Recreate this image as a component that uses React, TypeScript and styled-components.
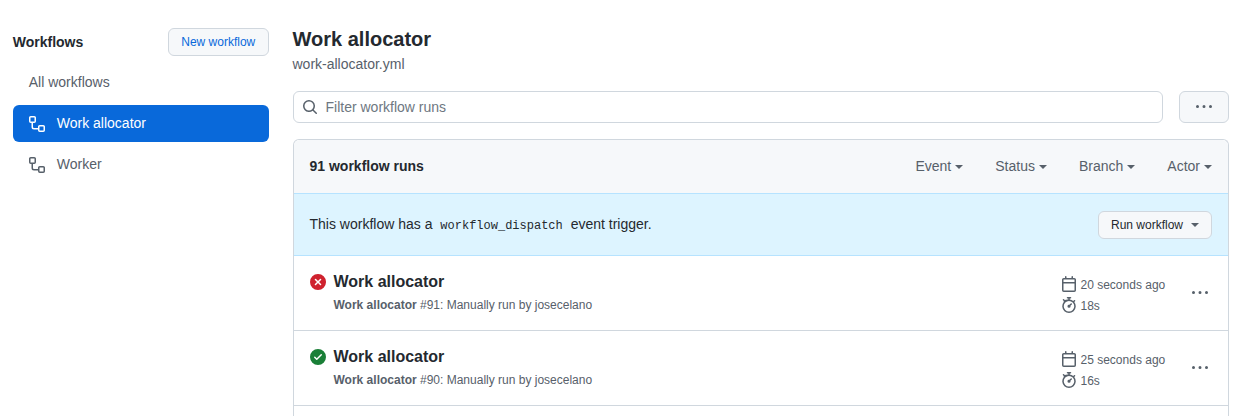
import React from "react";
import styled, { createGlobalStyle } from "styled-components";

const GlobalStyle = createGlobalStyle`
  html, body {
    margin: 0;
    padding: 0;
    height: 416px;
    overflow: hidden;
    background: #ffffff;
    color: #24292f;
    font-family: "Liberation Sans", Arial, sans-serif;
    font-size: 14px;
    line-height: 1.5;
  }
`;

const Page = styled.div`
  display: flex;
  gap: 24px;
  padding: 28px 24px 0 12.75px;
  height: 416px;
  box-sizing: border-box;
  overflow: hidden;
`;

const Sidebar = styled.aside`
  width: 255.75px;
  flex: none;
`;

const SidebarHeader = styled.div`
  display: flex;
  align-items: center;
  justify-content: space-between;
  height: 28px;
  margin-bottom: 8px;
`;

const SidebarTitle = styled.h2`
  margin: 0;
  font-size: 14px;
  font-weight: 700;
`;

const NewWorkflowButton = styled.button`
  width: 100.5px;
  height: 28px;
  padding: 0;
  border: 1px solid #d0d7de;
  border-radius: 6px;
  background: #f6f8fa;
  color: #0969da;
  font: 12px "Liberation Sans", Arial, sans-serif;
`;

const NavList = styled.nav`
  display: flex;
  flex-direction: column;
  gap: 4px;
`;

const NavItem = styled.a<{ $active?: boolean }>`
  display: flex;
  align-items: center;
  gap: 12px;
  height: 37px;
  padding: 0 16px;
  border-radius: 6px;
  background: ${props => (props.$active ? "#0969da" : "transparent")};
  color: ${props => (props.$active ? "#ffffff" : "#57606a")};
  font-size: 14px;
`;

const Main = styled.main`
  flex: 1;
  min-width: 0;
`;

const Title = styled.h1`
  margin: 0;
  font-size: 20px;
  font-weight: 700;
  line-height: 23px;
`;

const FileName = styled.div`
  margin-top: 3px;
  color: #57606a;
  font-size: 14px;
  line-height: 21px;
`;

const FilterRow = styled.div`
  display: flex;
  gap: 16px;
  margin-top: 16px;
`;

const FilterInput = styled.div`
  flex: 1;
  display: flex;
  align-items: center;
  gap: 8px;
  height: 32px;
  padding: 0 8px;
  box-sizing: border-box;
  border: 1px solid #d0d7de;
  border-radius: 6px;
  color: #6e7781;
  font-size: 14px;

  svg {
    color: #57606a;
  }
`;

const KebabButton = styled.button`
  display: flex;
  align-items: center;
  justify-content: center;
  width: 50px;
  height: 32px;
  padding: 0;
  border: 1px solid #d0d7de;
  border-radius: 6px;
  background: #f6f8fa;
  color: #57606a;
`;

const RunsBox = styled.section`
  margin-top: 16px;
  border: 1px solid #d0d7de;
  border-bottom: none;
  border-radius: 6px 6px 0 0;
`;

const BoxHeader = styled.div`
  display: flex;
  align-items: center;
  justify-content: space-between;
  height: 53px;
  padding: 0 16px;
  background: #f6f8fa;
  border-radius: 6px 6px 0 0;
`;

const RunCount = styled.strong`
  font-size: 14px;
  font-weight: 700;
`;

const Filters = styled.div`
  display: flex;
  gap: 32px;
`;

const FilterMenu = styled.span`
  display: inline-flex;
  align-items: center;
  gap: 4px;
  color: #57606a;
  font-size: 14px;
`;

const Caret = styled.span<{ $color?: string }>`
  display: inline-block;
  width: 0;
  height: 0;
  margin-top: 1px;
  border-top: 4px solid ${props => props.$color || "currentColor"};
  border-left: 4px solid transparent;
  border-right: 4px solid transparent;
`;

const Notice = styled.div`
  display: flex;
  align-items: center;
  justify-content: space-between;
  height: 61px;
  padding: 0 16px;
  background: #ddf4ff;
  border-top: 1px solid #b6e3ff;
  border-bottom: 1px solid #b6e3ff;
  font-size: 14px;
`;

const Code = styled.code`
  margin: 0 4px;
  font-family: "Liberation Mono", monospace;
  font-size: 12px;
`;

const RunButton = styled.button`
  display: flex;
  align-items: center;
  gap: 8px;
  height: 28px;
  padding: 0 12px;
  border: 1px solid #d0d7de;
  border-radius: 6px;
  background: #f6f8fa;
  color: #24292f;
  font: 12px "Liberation Sans", Arial, sans-serif;
`;

const Run = styled.div`
  display: flex;
  align-items: flex-start;
  height: 75px;
  padding: 0 16px;
  box-sizing: border-box;
  border-bottom: 1px solid #d0d7de;
`;

const StatusIcon = styled.svg<{ $color: string }>`
  flex: none;
  margin-top: 18px;
  color: ${props => props.$color};
`;

const RunBody = styled.div`
  flex: 1;
  min-width: 0;
  margin-left: 8px;
  padding-top: 14px;
`;

const RunTitle = styled.div`
  font-size: 16px;
  font-weight: 700;
  line-height: 24px;
`;

const RunMeta = styled.div`
  margin-top: 2px;
  color: #57606a;
  font-size: 12px;
  line-height: 18px;

  b {
    font-weight: 700;
  }
`;

const RunTiming = styled.div`
  display: flex;
  flex-direction: column;
  gap: 1px;
  width: 128.5px;
  flex: none;
  padding-top: 18px;
  color: #57606a;
  font-size: 12px;
`;

const TimingLine = styled.div`
  display: flex;
  align-items: center;
  gap: 4px;
  height: 20px;
  line-height: 18px;
`;

const TimingText = styled.span`
  margin-top: 2px;
`;

const RunMenu = styled.div`
  flex: none;
  width: 18px;
  margin: 0 3px 0 2px;
  padding-top: 29px;
  color: #57606a;
  display: flex;
  justify-content: center;
`;

const WORKFLOW =
  "M0 1.75C0 .784.784 0 1.75 0h3.5C6.216 0 7 .784 7 1.75v3.5A1.75 1.75 0 0 1 5.25 7H4v4a1 1 0 0 0 1 1h4v-1.25C9 9.784 9.784 9 10.75 9h3.5c.966 0 1.75.784 1.75 1.75v3.5A1.75 1.75 0 0 1 14.25 16h-3.5A1.75 1.75 0 0 1 9 14.25v-.75H5A2.5 2.5 0 0 1 2.5 11V7h-.75A1.75 1.75 0 0 1 0 5.25Zm1.75-.25a.25.25 0 0 0-.25.25v3.5c0 .138.112.25.25.25h3.5a.25.25 0 0 0 .25-.25v-3.5a.25.25 0 0 0-.25-.25Zm9 9a.25.25 0 0 0-.25.25v3.5c0 .138.112.25.25.25h3.5a.25.25 0 0 0 .25-.25v-3.5a.25.25 0 0 0-.25-.25Z";
const SEARCH =
  "M10.68 11.74a6 6 0 0 1-7.922-8.982 6 6 0 0 1 8.982 7.922l3.04 3.04a.749.749 0 0 1-.326 1.275.749.749 0 0 1-.734-.215ZM11.5 7a4.499 4.499 0 1 0-8.997 0A4.499 4.499 0 0 0 11.5 7Z";
const KEBAB =
  "M8 9a1.5 1.5 0 1 0 0-3 1.5 1.5 0 0 0 0 3ZM1.5 9a1.5 1.5 0 1 0 0-3 1.5 1.5 0 0 0 0 3Zm13 0a1.5 1.5 0 1 0 0-3 1.5 1.5 0 0 0 0 3Z";
const X_CIRCLE =
  "M2.343 13.657A8 8 0 1 1 13.658 2.343 8 8 0 0 1 2.343 13.657ZM6.03 4.97a.751.751 0 0 0-1.042.018.751.751 0 0 0-.018 1.042L6.94 8 4.97 9.97a.749.749 0 0 0 .326 1.275.749.749 0 0 0 .734-.215L8 9.06l1.97 1.97a.749.749 0 0 0 1.275-.326.749.749 0 0 0-.215-.734L9.06 8l1.97-1.97a.749.749 0 0 0-.326-1.275.749.749 0 0 0-.734.215L8 6.94Z";
const CHECK_CIRCLE =
  "M8 16A8 8 0 1 1 8 0a8 8 0 0 1 0 16Zm3.78-9.72a.751.751 0 0 0-.018-1.042.751.751 0 0 0-1.042-.018L6.75 9.19 5.28 7.72a.751.751 0 0 0-1.042.018.751.751 0 0 0-.018 1.042l2 2a.75.75 0 0 0 1.06 0Z";
const CALENDAR =
  "M4.75 0a.75.75 0 0 1 .75.75V2h5V.75a.75.75 0 0 1 1.5 0V2h1.25c.966 0 1.75.784 1.75 1.75v10.5A1.75 1.75 0 0 1 13.25 16H2.75A1.75 1.75 0 0 1 1 14.25V3.75C1 2.784 1.784 2 2.75 2H4V.75A.75.75 0 0 1 4.75 0ZM2.5 7.5v6.75c0 .138.112.25.25.25h10.5a.25.25 0 0 0 .25-.25V7.5Zm10.75-4H2.75a.25.25 0 0 0-.25.25V6h11V3.75a.25.25 0 0 0-.25-.25Z";
const STOPWATCH =
  "M5.75.75A.75.75 0 0 1 6.5 0h3a.75.75 0 0 1 0 1.5h-.75v1l-.001.041a6.724 6.724 0 0 1 3.464 1.435l.007-.006.75-.75a.749.749 0 0 1 1.275.326.749.749 0 0 1-.215.734l-.75.75-.006.007a6.75 6.75 0 1 1-10.548 0L2.72 4.03l-.75-.75a.751.751 0 0 1 .018-1.042.751.751 0 0 1 1.042-.018l.75.75.007.006A6.72 6.72 0 0 1 7.25 2.541V1.5H6.5a.75.75 0 0 1-.75-.75ZM8 14.5a5.25 5.25 0 1 0-.001-10.501A5.25 5.25 0 0 0 8 14.5Zm.389-6.7 1.33-1.33a.75.75 0 1 1 1.061 1.06L9.45 8.861A1.503 1.503 0 0 1 8 10.75a1.499 1.499 0 1 1 .389-2.95Z";

const Icon = ({ d, size = 16 }: { d: string; size?: number }) => (
  <svg width={size} height={size} viewBox="0 0 16 16" fill="currentColor" style={{ flex: "none" }}>
    <path d={d} />
  </svg>
);

const runs = [
  { id: 91, ok: false, ago: "20 seconds ago", took: "18s" },
  { id: 90, ok: true, ago: "25 seconds ago", took: "16s" }
];

const App = () => (
  <>
    <GlobalStyle />
    <Page>
      <Sidebar>
        <SidebarHeader>
          <SidebarTitle>Workflows</SidebarTitle>
          <NewWorkflowButton>New workflow</NewWorkflowButton>
        </SidebarHeader>
        <NavList>
          <NavItem>All workflows</NavItem>
          <NavItem $active>
            <Icon d={WORKFLOW} />
            Work allocator
          </NavItem>
          <NavItem>
            <Icon d={WORKFLOW} />
            Worker
          </NavItem>
        </NavList>
      </Sidebar>
      <Main>
        <Title>Work allocator</Title>
        <FileName>work-allocator.yml</FileName>
        <FilterRow>
          <FilterInput>
            <Icon d={SEARCH} />
            Filter workflow runs
          </FilterInput>
          <KebabButton>
            <Icon d={KEBAB} />
          </KebabButton>
        </FilterRow>
        <RunsBox>
          <BoxHeader>
            <RunCount>91 workflow runs</RunCount>
            <Filters>
              {["Event", "Status", "Branch", "Actor"].map(name => (
                <FilterMenu key={name}>
                  {name}
                  <Caret />
                </FilterMenu>
              ))}
            </Filters>
          </BoxHeader>
          <Notice>
            <span>
              This workflow has a <Code>workflow_dispatch</Code> event trigger.
            </span>
            <RunButton>
              Run workflow
              <Caret $color="#57606a" />
            </RunButton>
          </Notice>
          {runs.map(run => (
            <Run key={run.id}>
              <StatusIcon
                $color={run.ok ? "#1a7f37" : "#cf222e"}
                width="16"
                height="16"
                viewBox="0 0 16 16"
                fill="currentColor"
              >
                <path d={run.ok ? CHECK_CIRCLE : X_CIRCLE} />
              </StatusIcon>
              <RunBody>
                <RunTitle>Work allocator</RunTitle>
                <RunMeta>
                  <b>Work allocator</b> #{run.id}: Manually run by josecelano
                </RunMeta>
              </RunBody>
              <RunTiming>
                <TimingLine>
                  <Icon d={CALENDAR} />
                  <TimingText>{run.ago}</TimingText>
                </TimingLine>
                <TimingLine>
                  <Icon d={STOPWATCH} />
                  <TimingText>{run.took}</TimingText>
                </TimingLine>
              </RunTiming>
              <RunMenu>
                <Icon d={KEBAB} />
              </RunMenu>
            </Run>
          ))}
          <Run />
        </RunsBox>
      </Main>
    </Page>
  </>
);

export default App;
